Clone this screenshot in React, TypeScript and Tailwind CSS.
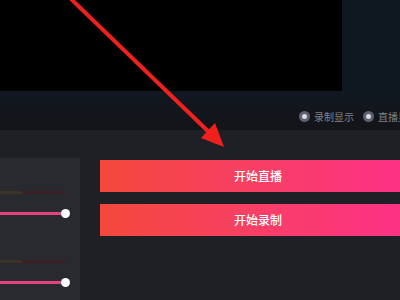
const font = { fontFamily: '"Noto Sans CJK SC", "Liberation Sans", sans-serif' };

function Radio({ label }: { label: string }) {
  return (
    <div className="flex items-center gap-[4px] shrink-0">
      <span className="w-[11px] h-[11px] rounded-full bg-[#5d5f70] flex items-center justify-center">
        <span className="w-[5px] h-[5px] rounded-full bg-[#d9dae6]" />
      </span>
      <span className="text-[10px] leading-none text-[#7f818b] whitespace-nowrap">{label}</span>
    </div>
  );
}

function Slider() {
  return (
    <div className="flex flex-col">
      {/* faint level meter */}
      <div className="flex h-[3px] w-[65px]">
        <div className="w-[22px] bg-[#3a3427]" />
        <div className="flex-1 bg-[#3b1f25]" />
      </div>
      {/* volume slider */}
      <div className="relative mt-[15px] h-[9px] w-[72px] flex items-center">
        <div className="h-[3px] w-[66px] bg-[#e2447c]" />
        <div className="absolute left-[61px] top-0 w-[9px] h-[9px] rounded-full bg-white" />
      </div>
    </div>
  );
}

function GradientButton({ label }: { label: string }) {
  return (
    <button className="w-[316px] h-[32px] shrink-0 bg-gradient-to-r from-[#f4483a] to-[#fd2f88] text-white text-[12px] font-medium flex items-center justify-center">
      {label}
    </button>
  );
}

export default function App() {
  return (
    <div className="relative w-[400px] h-[300px] overflow-hidden bg-[#1f2026] flex flex-col" style={font}>
      {/* preview area */}
      <div className="flex h-[91px] shrink-0">
        <div className="w-[342px] bg-black" />
        <div className="flex-1 bg-[#0f1720]" />
      </div>

      {/* display options strip */}
      <div className="h-[39px] shrink-0 bg-gradient-to-b from-[#101820] to-[#141418] flex items-center gap-[9px] pl-[299px] pt-[12px]">
        <Radio label="录制显示" />
        <Radio label="直播显示" />
      </div>

      {/* controls */}
      <div className="flex flex-1 pt-[28px]">
        <div className="w-[80px] shrink-0 bg-[#292a30] pt-[33px] flex flex-col gap-[42px]">
          <Slider />
          <Slider />
        </div>
        <div className="flex flex-col gap-[12px] pl-[20px] pt-[2px]">
          <GradientButton label="开始直播" />
          <GradientButton label="开始录制" />
        </div>
      </div>

      {/* annotation arrow */}
      <svg className="absolute left-0 top-0 pointer-events-none" width="400" height="300" viewBox="0 0 400 300">
        <line x1="70" y1="-2" x2="212" y2="135" stroke="#f0201e" strokeWidth="4" strokeLinecap="round" />
        <polygon points="224,147 201,138 215,123" fill="#f0201e" />
      </svg>
    </div>
  );
}
